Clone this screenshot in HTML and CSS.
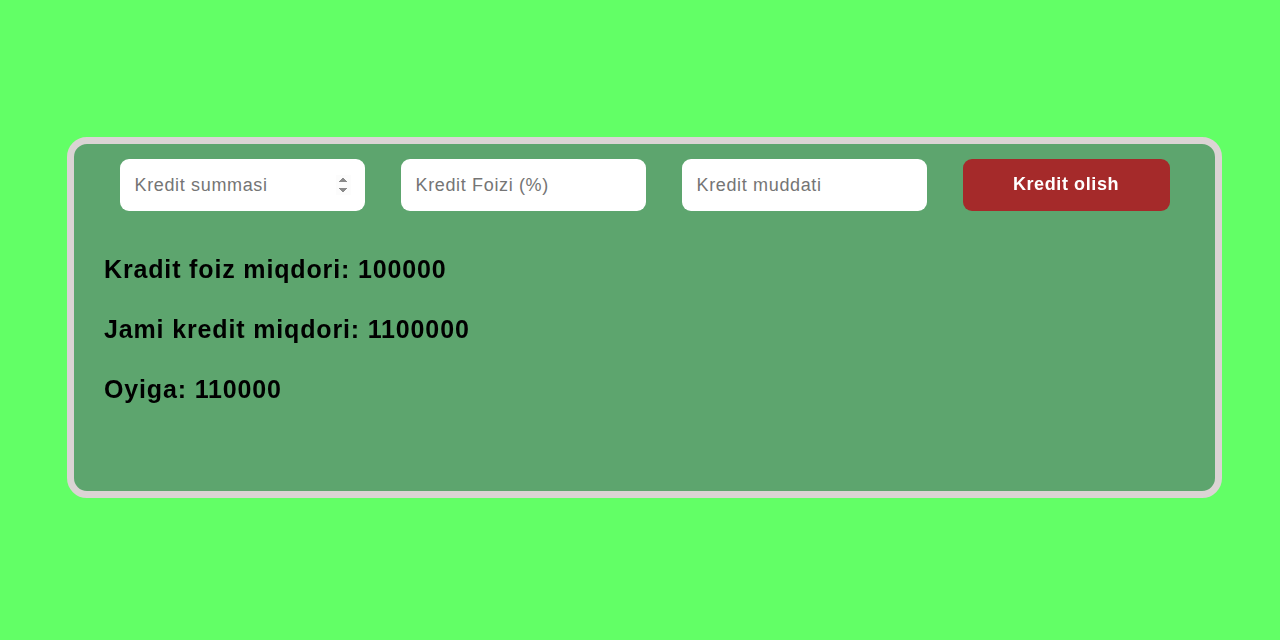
FILE: index.html
```html
<!DOCTYPE html>
<html lang="uz">
<head>
<meta charset="utf-8">
<title>Kredit</title>
<link rel="stylesheet" href="styles.css">
</head>
<body>
<div class="card">
  <div class="form-row">
    <input class="field" type="number" placeholder="Kredit summasi" autofocus>
    <input class="field" type="number" placeholder="Kredit Foizi (%)">
    <input class="field" type="number" placeholder="Kredit muddati">
    <button class="btn" type="button">Kredit olish</button>
  </div>
  <div class="results">
    <h2 class="result">Kradit foiz miqdori: 100000</h2>
    <h2 class="result">Jami kredit miqdori: 1100000</h2>
    <h2 class="result">Oyiga: 110000</h2>
  </div>
</div>
</body>
</html>
```
FILE: styles.css
```css
html, body {
  margin: 0;
  padding: 0;
}
body {
  background: #62ff66;
  font-family: "Liberation Sans", Arial, sans-serif;
  padding: 137px 58px 0 67px;
  height: 640px;
  box-sizing: border-box;
}
.card {
  box-sizing: border-box;
  height: 361px;
  background: #5da56e;
  border: 7px solid #dbd4d4;
  border-radius: 20px;
  padding: 15px 30px 0 30px;
}
.form-row {
  display: flex;
  justify-content: center;
  gap: 36px;
}
.field {
  box-sizing: border-box;
  width: 245px;
  height: 52px;
  border: none;
  border-radius: 9px;
  background: #fff;
  padding: 0 14px 0 15px;
  font-family: "Liberation Sans", Arial, sans-serif;
  font-size: 18px;
  letter-spacing: 0.65px;
  color: #000;
  outline: none;
}
.field::placeholder {
  color: #757575;
}
.btn {
  width: 207px;
  height: 52px;
  border: none;
  border-radius: 9px;
  background: #a52a2a;
  color: #fff;
  font-family: "Liberation Sans", Arial, sans-serif;
  font-size: 18px;
  letter-spacing: 0.6px;
  font-weight: bold;
  padding: 0 0 2px 0;
}
.results {
  margin-top: 44px;
}
.result {
  margin: 0 0 32px 0;
  font-size: 25px;
  line-height: 28px;
  letter-spacing: 0.85px;
  font-weight: bold;
  color: #000;
}
```
